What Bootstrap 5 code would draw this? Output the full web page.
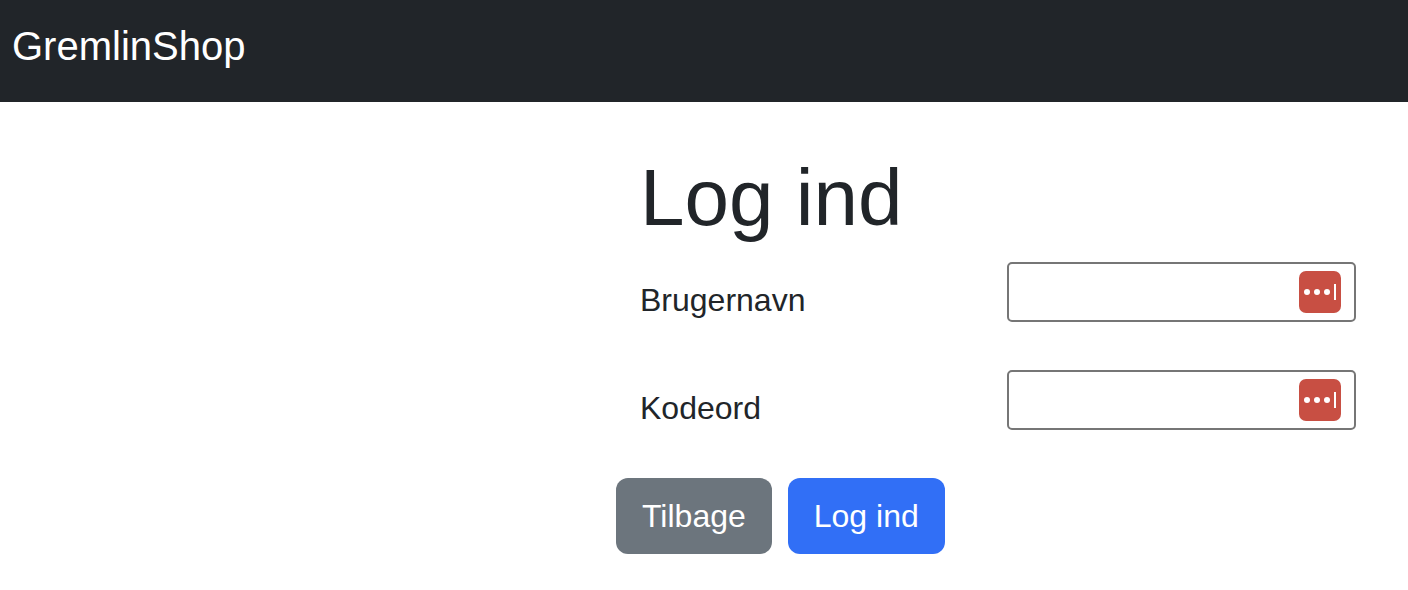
<!DOCTYPE html>
<html lang="en">
<head>
  <meta charset="UTF-8">
  <title>GremlinShop</title>
  <link href="https://cdn.jsdelivr.net/npm/bootstrap@5.3.3/dist/css/bootstrap.min.css" rel="stylesheet">
  <style>
    body { font-family: "Liberation Sans", Arial, sans-serif; font-size: 32px; color: #212529; }
    .top-bar { height: 102px; padding: 0 12px 10px; }
    .top-bar .navbar-brand { font-size: 40px; margin: 0; padding: 0; line-height: 1; }
    .login-wrap { width: 776px; margin-left: 616px; padding-top: 48px; }
    .login-title { font-size: 80px; line-height: 96px; margin: 0 0 16px 24px; font-weight: 400; }
    .field-row { margin-left: 24px; height: 108px; }
    .field-label { width: 367px; padding-top: 19px; line-height: 38px; }
    .field-box { position: relative; width: 349px; }
    .field-box input { height: 60px; border: 2px solid #767676; border-radius: 5px; padding: 0 60px 0 12px; }
    .pass-icon { position: absolute; right: 15px; top: 9px; width: 42px; height: 42px; }
    .action-btn { font-size: 32px; line-height: 48px; padding: 14px 26px; border-radius: 12px; border: 0; }
    .btn-back { background: #6c757d; color: #fff; }
    .btn-login { background: #316ff6; color: #fff; }
  </style>
</head>
<body>
<nav class="navbar top-bar bg-dark">
  <a class="navbar-brand text-white" href="#">GremlinShop</a>
</nav>

<div class="login-wrap">
  <h1 class="login-title">Log ind</h1>
  <div class="d-flex field-row">
    <label class="field-label" for="user">Brugernavn</label>
    <div class="field-box">
      <input id="user" type="text" class="form-control">
      <svg class="pass-icon" viewBox="0 0 42 42"><rect width="42" height="42" rx="7" fill="#c84f43"/><circle cx="8" cy="21" r="3" fill="#fff"/><circle cx="18" cy="21" r="3" fill="#fff"/><circle cx="28" cy="21" r="3" fill="#fff"/><rect x="35" y="13" width="2" height="16" fill="#fff"/></svg>
    </div>
  </div>
  <div class="d-flex field-row">
    <label class="field-label" for="pass">Kodeord</label>
    <div class="field-box">
      <input id="pass" type="password" class="form-control">
      <svg class="pass-icon" viewBox="0 0 42 42"><rect width="42" height="42" rx="7" fill="#c84f43"/><circle cx="8" cy="21" r="3" fill="#fff"/><circle cx="18" cy="21" r="3" fill="#fff"/><circle cx="28" cy="21" r="3" fill="#fff"/><rect x="35" y="13" width="2" height="16" fill="#fff"/></svg>
    </div>
  </div>
  <div class="d-flex gap-3">
    <button class="btn action-btn btn-back">Tilbage</button>
    <button class="btn action-btn btn-login">Log ind</button>
  </div>
</div>
<script src="https://cdn.jsdelivr.net/npm/bootstrap@5.3.3/dist/js/bootstrap.bundle.min.js"></script>
</body>
</html>
